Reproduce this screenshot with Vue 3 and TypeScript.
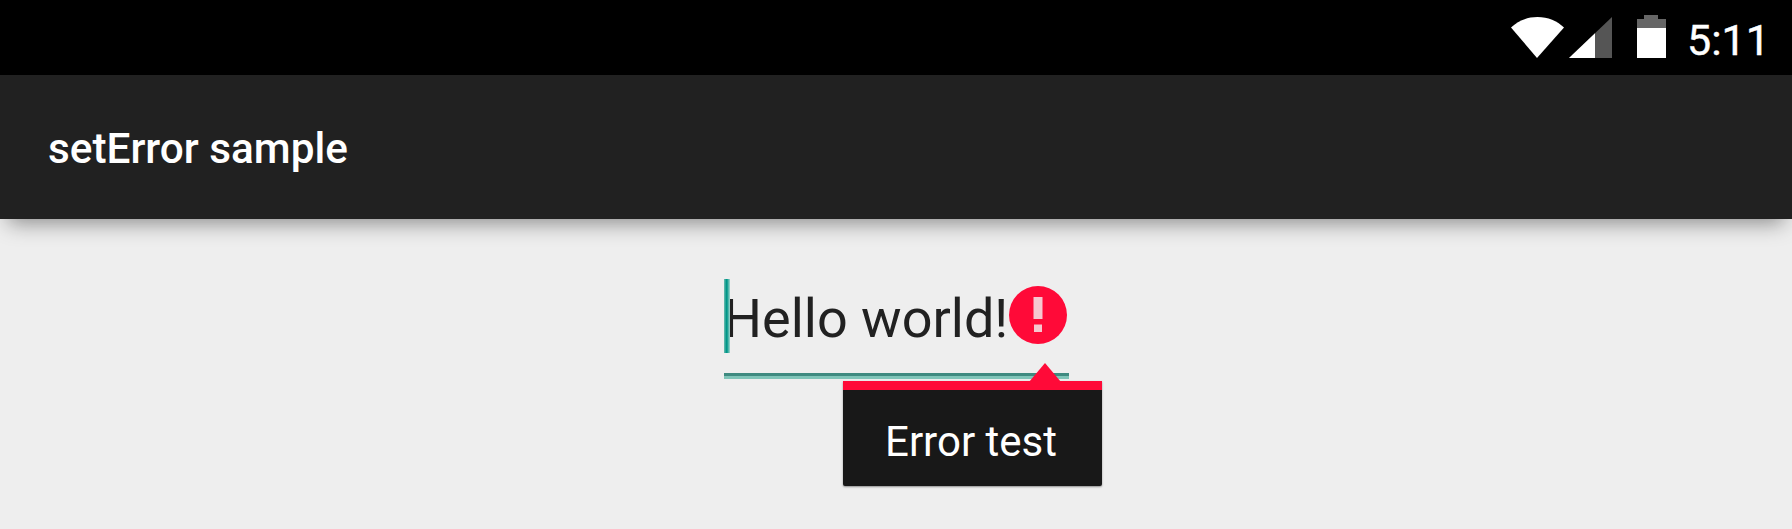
<script setup lang="ts">
const title: string = 'setError sample'
const value: string = 'Hello world!'
const errorText: string = 'Error test'
</script>

<template>
  <div class="screen">
    <header class="status">
      <svg class="wifi" width="53" height="41" viewBox="0 0 53 41"><path d="M0 10.5C7 4 16 0 26.5 0S46 4 53 10.5L26 41Z" fill="#fff" /></svg>
      <svg class="signal" width="43" height="41" viewBox="0 0 43 41">
        <path d="M0 41 43 0V41Z" fill="#555" />
        <path d="M0 41 26 16.2V41Z" fill="#fff" />
      </svg>
      <svg class="battery" width="29" height="43" viewBox="0 0 29 43">
        <path d="M7 0H21V4H29V43H0V4H7Z" fill="#666" />
        <rect y="13" width="29" height="30" fill="#fff" />
      </svg>
      <span class="clock">5:11</span>
    </header>
    <div class="appbar"><span class="title">{{ title }}</span></div>
    <main class="content">
      <div class="field">
        <div class="line">
          <i class="caret"></i>
          <span class="value">{{ value }}</span>
          <svg class="alert" width="58" height="58" viewBox="0 0 58 58">
            <circle cx="29" cy="29" r="29" fill="#ff0a38" />
            <rect x="24.5" y="11" width="9" height="22" fill="#f6c8d0" />
            <rect x="25" y="38.500" width="8" height="7.500" fill="#f6c8d0" />
          </svg>
        </div>
        <div class="underline"></div>
        <div class="popup">
          <svg class="arrow" width="32" height="19" viewBox="0 0 32 19"><path d="M0 19 16 0 32 19Z" fill="#ff0a38" /></svg>
          <div class="popup-text">{{ errorText }}</div>
        </div>
      </div>
    </main>
  </div>
</template>

<style>
html, body { margin: 0; background: #eeeeee; }
</style>

<style scoped>
.screen {
  width: 1792px;
  height: 529px;
  overflow: hidden;
  background: #eeeeee;
  font-family: Roboto, "Liberation Sans", sans-serif;
}
.status {
  height: 75px;
  background: #000;
  display: flex;
  align-items: flex-start;
  justify-content: flex-end;
  box-sizing: border-box;
  padding-right: 28px;
  color: #fff;
}
.wifi { margin-top: 17px; margin-right: 5px; }
.signal { margin-top: 17px; margin-right: 25px; }
.battery { margin-top: 15px; margin-right: 21px; }
.clock {
  font-size: 43px;
  line-height: 48px;
  margin-top: 16px;
  -webkit-text-stroke: 0.4px #fff;
  width: 77px;
  white-space: nowrap;
}
.appbar {
  position: relative;
  z-index: 1;
  height: 144px;
  background: #212121;
  display: flex;
  align-items: center;
  padding-left: 48px;
  box-shadow: 0 12px 20px -8px rgba(0, 0, 0, 0.42);
}
.title {
  color: #fff;
  font-size: 42.3px;
  font-weight: 500;
  position: relative;
  top: 1px;
}
.content { display: flex; justify-content: center; padding-top: 60px; }
.field { position: relative; width: 345px; }
.line { display: flex; align-items: flex-start; height: 94px; }
.caret {
  position: absolute;
  left: 0;
  top: 0;
  width: 6px;
  height: 74px;
  background: linear-gradient(to right, #6dbdb1, #009688 40%, #009688 50%, #a5d8d0);
}
.value {
  font-size: 54px;
  line-height: 65px;
  margin-top: 7px;
  color: #212121;
  white-space: nowrap;
  width: 285px;
  flex: none;
}
.alert { margin-top: 7px; flex: none; filter: blur(0.6px); }
.underline {
  height: 6px;
  background: linear-gradient(to bottom, #3f8a80 50%, #7fc4b8 50%);
}
.popup {
  position: absolute;
  left: 119px;
  top: 102px;
  width: 259px;
  height: 105px;
  box-sizing: border-box;
  background: #181818;
  border-top: 9px solid #ff0a38;
  box-shadow: 0 1px 2px rgba(0, 0, 0, 0.4);
  border-radius: 0 0 2px 2px;
}
.arrow { position: absolute; left: 186px; top: -27px; }
.popup-text {
  color: #fff;
  font-size: 42px;
  line-height: 49px;
  text-align: center;
  padding-top: 27px;
  padding-right: 2px;
}
</style>
